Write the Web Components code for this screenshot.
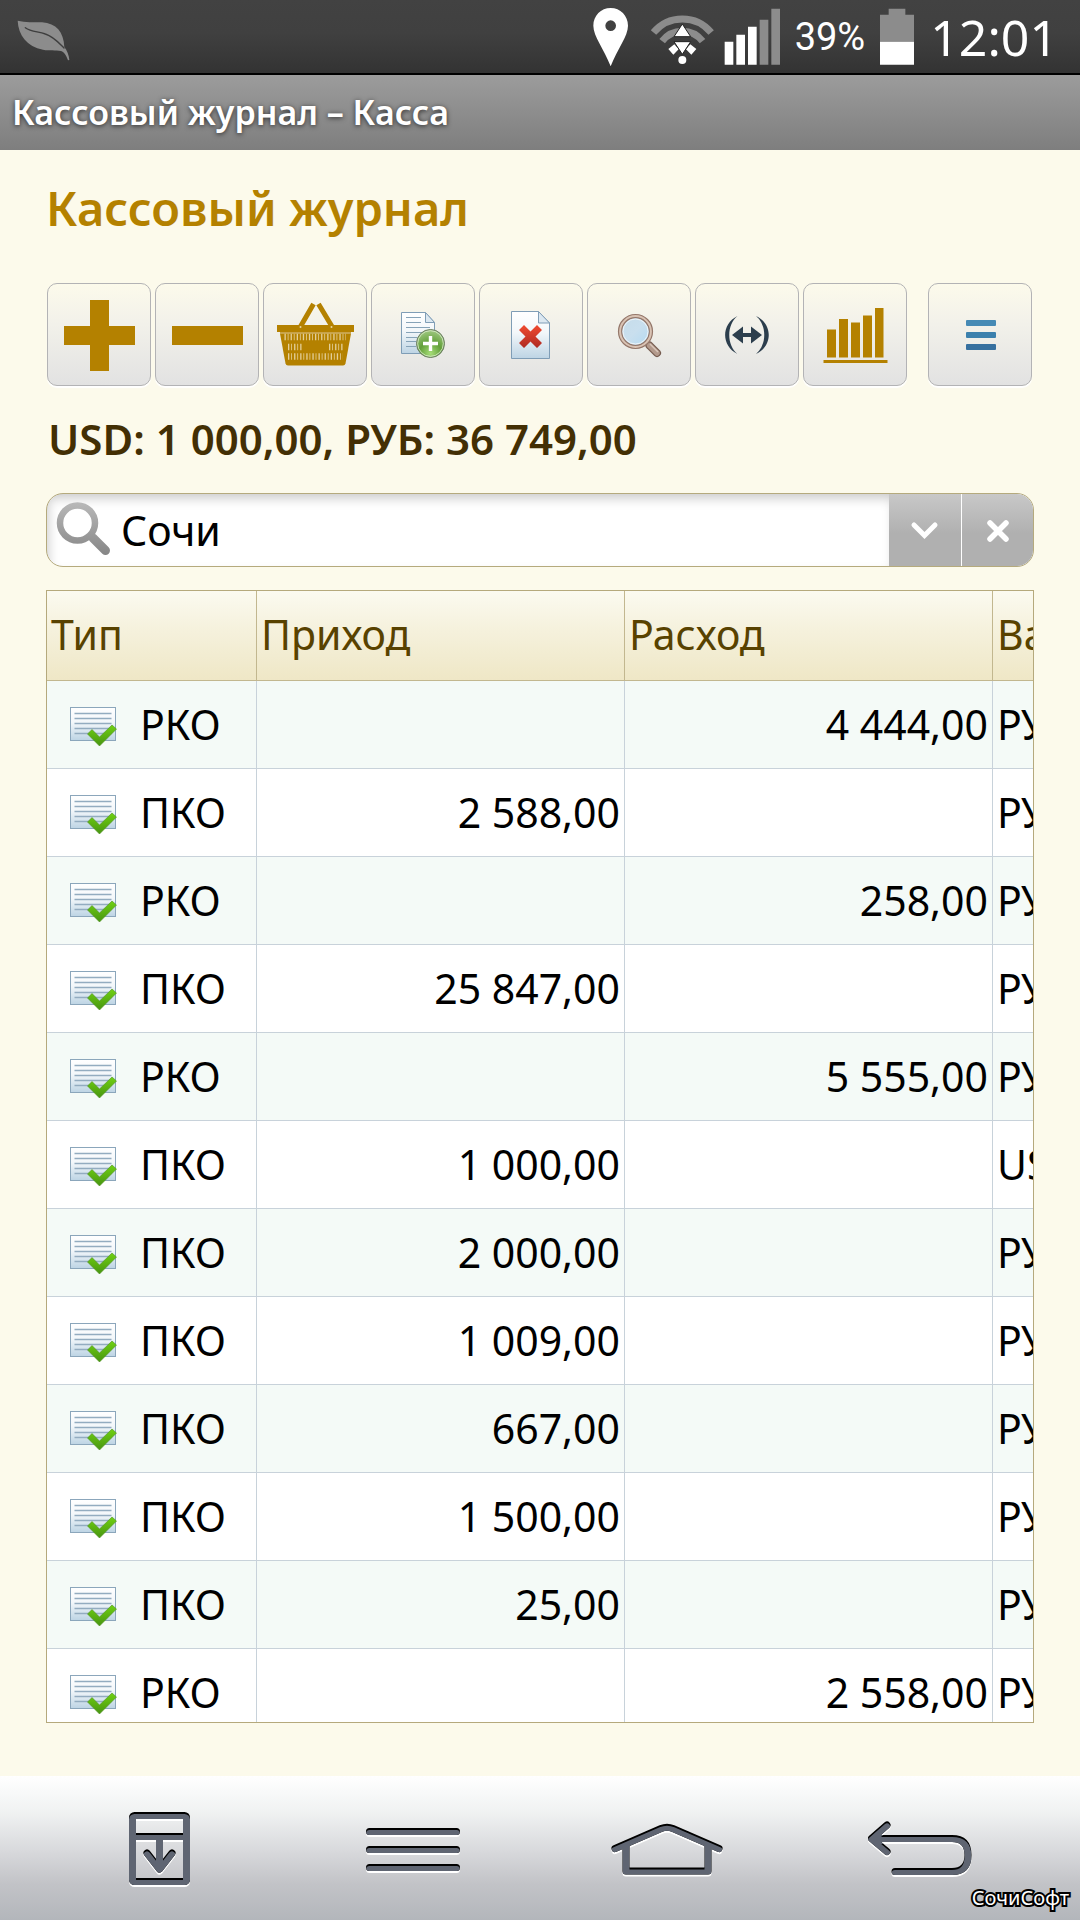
<!DOCTYPE html>
<html lang="ru">
<head>
<meta charset="utf-8">
<meta name="viewport" content="width=device-width, initial-scale=1">
<title>Кассовый журнал – Касса</title>
<style>
  html, body { margin: 0; height: 100%; }
  body { font-family: "Noto Sans", "Open Sans", sans-serif; }
</style>
</head>
<body>
<cash-app></cash-app>

<script>
const define = (name, html, setup) => {
  const template = document.createElement('template');
  template.innerHTML = html;
  customElements.define(name, class extends HTMLElement {
    constructor() {
      super();
      this.attachShadow({ mode: 'open' }).append(template.content.cloneNode(true));
    }
    connectedCallback() {
      if (setup && !this.ready) { this.ready = true; setup.call(this, this.shadowRoot); }
    }
  });
};

/* ---------- status bar ---------- */
define('status-bar', `
  <style>
    :host { display: flex; align-items: center; box-sizing: border-box; height: 75px; flex: none;
      padding: 0 22px 0 17px; color: #fff; border-bottom: 2px solid #000;
      background: linear-gradient(#424242 0%, #404040 45%, #333 100%); }
    svg { display: block; flex: none; }
    .space { flex: 1; }
    .signal { margin: 0 14px 0 9px; }
    .wifi { margin-left: 21px; }
    .battery { margin: 0 16px 0 15px; }
    .percent { font: 38px/60px Roboto, "Noto Sans", sans-serif; }
    .clock { font-size: 50px; line-height: 60px; }
  </style>
  <svg width="54" height="50" viewBox="50 38 162 150">
    <path fill="#8c8c8c" d="M52 64C75 70 100 68 125 69C168 72 190 98 192 143C200 153 206 168 207 182L203 183C199 170 192 158 182 155C165 152 150 155 128 151C80 141 54 108 52 64Z"/>
    <path fill="none" stroke="#3e3e3e" stroke-width="4" stroke-linecap="round" d="M75 85C92 98 112 96 135 104C160 112 174 129 191 146"/>
  </svg>
  <span class="space"></span>
  <svg width="37" height="60" viewBox="150 24 111 180">
    <path fill="#fff" fill-rule="evenodd" d="M206 27C235 27 258 50 258 80C258 112 226 150 206 202C186 150 154 112 154 80C154 50 177 27 206 27ZM206 64A16 16 0 1 0 206 96A16 16 0 1 0 206 64Z"/>
  </svg>
  <svg class="wifi" width="65" height="60" viewBox="320 22 195 180">
    <g fill="none" stroke="#8c8c8c" stroke-width="21">
      <path d="M330.500 98.500A112 112 0 0 1 503.500 98.500"/>
      <path d="M356.500 124.500A76 76 0 0 1 477.500 124.500"/>
    </g>
    <path fill="#fff" d="M375 148L393 134L406 149L390 165ZM459 148L441 134L428 149L444 165Z"/>
    <circle cx="417" cy="181" r="12" fill="#fff"/>
    <path fill="#fff" stroke="#222" stroke-width="3" d="M417 73L442 111H392ZM392 126H442L417 164Z"/>
  </svg>
  <svg class="signal" width="57" height="60" viewBox="535 22 171 180">
    <path fill="#fff" d="M537 126h26v69h-26zM572 105h26v90h-26zM607 81h26v114h-26z"/>
    <path fill="#8c8c8c" d="M642 60h26v135h-26zM677 27h26v168h-26z"/>
  </svg>
  <span class="percent">39%</span>
  <svg class="battery" width="34" height="60" viewBox="987 22 102 180">
    <path fill="#8c8c8c" d="M1013 27h50v18h26v81h-102v-81h26z"/>
    <path fill="#fff" d="M987 126h102v69h-102z"/>
  </svg>
  <span class="clock">12:01</span>
`);

/* ---------- window title ---------- */
define('title-bar', `
  <style>
    :host { display: flex; align-items: center; height: 73px; flex: none; padding: 0 12px 2px;
      background: linear-gradient(#9c9c9c, #7e7e7e); }
    span { color: #fff; font-size: 34px; line-height: 48px; font-weight: 600;
      text-shadow: 0 1px 5px rgba(0,0,0,.7); }
  </style>
  <span><slot></slot></span>
`);

/* ---------- toolbar button ---------- */
const sheet = (id) => `<linearGradient id="${id}" x2="0" y2="1"><stop offset="0" stop-color="#fff"/><stop offset=".45" stop-color="#f3f7fa"/><stop offset="1" stop-color="#bdd4e4"/></linearGradient>`;
const toolIcons = {
  plus: `<path fill="#b48100" d="M43 17h19v26h26v19h-26v26h-19v-26h-26v-19h26z"/>`,
  minus: `<path fill="#b48100" d="M17 43h71v19h-71z"/>`,
  basket: `
    <path fill="none" stroke="#b48100" stroke-width="5" d="M50.500 21L37.500 43.500M55.500 21L69 43.500"/>
    <path fill="#b48100" d="M14 42h77v7h-77z"/>
    <path fill="#c9a34a" d="M17 49h71v1.500h-71z"/>
    <path fill="#b48100" d="M17 50.500h71l-5.500 30q-.5 2-2.500 2h-55q-2 0-2.500-2z"/>
    <circle cx="37.500" cy="44" r="1" fill="#e6d3a0"/><circle cx="68.500" cy="44" r="1" fill="#e6d3a0"/>
    <path stroke="#e3cf9a" stroke-width="6.500" stroke-dasharray="1.300 1.900 .8 2.100" d="M21.500 54H83M25 64H39M66 64H80M25 73.500H80"/>`,
  add: `<defs>${sheet('s')}<radialGradient id="g" cx=".5" cy=".85" r=".8"><stop offset="0" stop-color="#a6dd78"/><stop offset=".5" stop-color="#63a03a"/><stop offset="1" stop-color="#9cc67e"/></radialGradient></defs>
    <path fill="url(#s)" stroke="#7f9db6" d="M30.500 29.500h24l9 10v31h-33z"/>
    <path fill="#dce8f1" stroke="#7f9db6" d="M54.500 29.500v10h9z"/>
    <path stroke="#86a3b8" stroke-width="1.200" d="M35 34.500H50M35 39.500H50M35 44.500H59M35 49.500H52M35 54.500H46M35 58.500H45M35 63.500H45"/>
    <circle cx="59.500" cy="60.500" r="14" fill="url(#g)" stroke="#6b7a64" stroke-width="1"/>
    <circle cx="59.500" cy="60.500" r="12.800" fill="none" stroke="#dcecd0" stroke-width="1" opacity=".8"/>
    <path stroke="#fff" stroke-width="3.400" d="M52 60.500h15M59.500 53v15"/>`,
  remove: `<defs>${sheet('s')}<linearGradient id="r" x2="0" y2="1"><stop offset="0" stop-color="#f04a30"/><stop offset="1" stop-color="#ae2a22"/></linearGradient></defs>
    <path fill="url(#s)" stroke="#7f9db6" d="M32.500 28.500h27l11 11.500v35.500h-38z"/>
    <path fill="#dce8f1" stroke="#7f9db6" d="M59.500 28.500v11.500h11z"/>
    <path fill="url(#r)" d="M45 42l6.500 6.500L58 42l5 5l-6.500 6.500L63 60l-5 5l-6.500-6.500L45 65l-5-5l6.500-6.500L40 47z"/>`,
  find: `<defs><linearGradient id="l" x2="1" y2="1"><stop offset="0" stop-color="#c6dcea"/><stop offset=".5" stop-color="#c9dfee"/><stop offset=".8" stop-color="#bcdcf0"/></linearGradient></defs>
    <path stroke="#765c50" stroke-width="8" stroke-linecap="round" d="M62.500 62.500L70 70"/>
    <path stroke="#b39a8c" stroke-width="5.500" stroke-linecap="round" d="M62.500 62.500L70 70"/>
    <path stroke="#d9c6ba" stroke-width="1.500" d="M63 61L71 69"/>
    <circle cx="48.500" cy="48.500" r="17" fill="#d9c3b4" stroke="#94776a" stroke-width="1.200"/>
    <circle cx="48.500" cy="48.500" r="13.800" fill="url(#l)" stroke="#94776a" stroke-width="1.200"/>
    <circle cx="48.500" cy="48.500" r="12.500" fill="none" stroke="#eef5f9"/>`,
  width: `<path fill="#2c3e4d" d="M42.500 33C26 41 26 63 42.500 71C31.500 62 31.500 42 42.500 33ZM61 33C78 41 78 63 61 71C72 62 72 42 61 33ZM37 52l11-8.500v6.500h8v-6.500l11 8.500l-11 8.500v-6.500h-8v6.500z"/>`,
  chart: `<path fill="#b48100" d="M24 46.500h9v28h-9zM36 36h9v38.500h-9zM48 39.500h9v35h-9zM60 32.500h9v42h-9zM72 25h8.500v49.500h-8.500zM20.500 77h64v3h-64z"/>`,
  menu: `<rect x="38" y="37" width="30" height="6" rx="1" fill="#468ab5"/><rect x="38" y="49" width="30" height="6" rx="1" fill="#3b80ad"/><rect x="38" y="61" width="30" height="6" rx="1" fill="#36709f"/>`
};
define('tool-button', `
  <style>
    :host { display: block; }
    button { display: block; box-sizing: border-box; width: 104px; height: 103px; padding: 0;
      border: 1px solid #b3b3b5; border-radius: 10px; box-shadow: 0 2px 1px #fff;
      background: linear-gradient(#fcfaeb, #f2f1ea 40%, #e2e2e2); cursor: pointer; }
    svg { display: block; margin: -1px; }
  </style>
  <button type="button"></button>
`, function (root) {
  const button = root.querySelector('button');
  button.setAttribute('aria-label', this.getAttribute('label'));
  button.innerHTML = `<svg width="104" height="103" viewBox="0 0 104 103">${toolIcons[this.getAttribute('icon')]}</svg>`;
});

define('tool-bar', `
  <style>
    :host { display: flex; gap: 4px; padding: 0 1px; }
    .end { margin-left: auto; padding-right: 1px; }
  </style>
  <slot></slot><div class="end"><slot name="end"></slot></div>
`);

/* ---------- search ---------- */
define('search-field', `
  <style>
    :host { display: block; }
    form { display: flex; box-sizing: border-box; height: 74px; margin: 0; overflow: hidden;
      border: 1px solid #b5aa7d; border-radius: 17px; background: #fff; }
    label { display: flex; flex: 1; min-width: 0; align-items: stretch;
      box-shadow: inset 3px 6px 12px -2px rgba(0,0,0,.22); }
    svg { display: block; flex: none; }
    input { flex: 1; min-width: 0; padding: 0 8px; border: 0; outline: 0; background: none;
      color: #000; font: inherit; font-size: 41px; }
    button { width: 72px; padding: 0; border: 0; cursor: pointer;
      background: linear-gradient(#c8c8c8, #b0b0b0 55%); }
    button + button { border-left: 1px solid #fff; }
  </style>
  <form>
    <label>
      <svg width="66" height="72" viewBox="0 0 66 72">
        <defs><linearGradient id="q" gradientUnits="userSpaceOnUse" x1="0" y1="8" x2="0" y2="62"><stop offset="0" stop-color="#b9b9b9"/><stop offset="1" stop-color="#858585"/></linearGradient></defs>
        <circle cx="30.500" cy="29" r="17.500" fill="#fff" stroke="url(#q)" stroke-width="6.500"/>
        <path stroke="url(#q)" stroke-width="9" stroke-linecap="round" d="M46 44L58.500 56.500"/>
      </svg>
      <input type="text" value="Сочи" aria-label="Поиск">
    </label>
    <button type="button" aria-label="Показать варианты"><svg width="71" height="72" viewBox="0 0 71 72"><path fill="none" stroke="#fff" stroke-width="5" stroke-linecap="round" d="M25 31l10.500 10.500L46 31"/></svg></button>
    <button type="button" aria-label="Очистить"><svg width="71" height="72" viewBox="0 0 71 72"><path stroke="#fff" stroke-width="5.500" stroke-linecap="round" d="M28 29l16 16M44 29l-16 16"/></svg></button>
  </form>
`);

/* ---------- journal table ---------- */
const records = [
  ['РКО', '', '4 444,00', 'РУБ'],
  ['ПКО', '2 588,00', '', 'РУБ'],
  ['РКО', '', '258,00', 'РУБ'],
  ['ПКО', '25 847,00', '', 'РУБ'],
  ['РКО', '', '5 555,00', 'РУБ'],
  ['ПКО', '1 000,00', '', 'USD'],
  ['ПКО', '2 000,00', '', 'РУБ'],
  ['ПКО', '1 009,00', '', 'РУБ'],
  ['ПКО', '667,00', '', 'РУБ'],
  ['ПКО', '1 500,00', '', 'РУБ'],
  ['ПКО', '25,00', '', 'РУБ'],
  ['РКО', '', '2 558,00', 'РУБ']
];

define('posted-icon', `
  <style>:host { display: block; flex: none; padding-top: 6px; } svg { display: block; }</style>
  <svg width="48" height="40" viewBox="0 0 48 40">
    <defs>${sheet('s')}<linearGradient id="v" x2="0" y2="1"><stop offset="0" stop-color="#70d112"/><stop offset="1" stop-color="#479411"/></linearGradient></defs>
    <rect x=".5" y=".5" width="45" height="33" fill="url(#s)" stroke="#8ba6bb"/>
    <path stroke="#93acc0" stroke-width="1.400" d="M4.500 6.500h37M4.500 11.500h37M4.500 16.500h37M4.500 21.500h37M4.500 26.500h37"/>
    <path fill="url(#v)" stroke="#4f9024" stroke-width=".6" d="M17.500 27L22 22.500L29.500 30L42 18L46.500 22L29.500 39z"/>
  </svg>
`);

define('journal-table', `
  <style>
    :host { display: block; box-sizing: border-box; min-height: 0; overflow: auto; scrollbar-width: none;
      border: 1px solid #b5a97c; background: #fff; }
    table { border-collapse: separate; border-spacing: 0; table-layout: fixed; width: 1156px; font-size: 41px; line-height: 56px; }
    th, td { box-sizing: border-box; padding: 0 4px 2px; border-right: 1px solid #c8d2da; border-bottom: 1px solid #c8d2da;
      white-space: nowrap; font-weight: 400; text-align: left; }
    th { height: 90px; padding-bottom: 4px; color: #584200; border-color: #c2b78f;
      background: linear-gradient(#fbfaf0, #f5f1dc 45%, #efe7c6); }
    td { height: 88px; color: #000; }
    td.sum { text-align: right; }
    tbody tr:nth-child(odd) { background: #f4faf7; }
    .type { display: flex; align-items: center; gap: 22px; padding-left: 19px; }
    .kind { width: 210px; } .amount { width: 368px; }
  </style>
  <table>
    <colgroup><col class="kind"><col class="amount"><col class="amount"><col></colgroup>
    <thead><tr><th>Тип</th><th>Приход</th><th>Расход</th><th>Валюта</th></tr></thead>
    <tbody></tbody>
  </table>
`, function (root) {
  root.querySelector('tbody').innerHTML = records.map(([type, income, expense, currency]) => `
    <tr><td><div class="type"><posted-icon></posted-icon><span>${type}</span></div></td>
    <td class="sum">${income}</td><td class="sum">${expense}</td><td>${currency}</td></tr>`).join('');
});

/* ---------- navigation ---------- */
const navIcons = {
  drop: `<g fill="none" stroke="#000" stroke-width="7"><rect x="9.500" y="4.500" width="54" height="66" rx="2"/><path d="M11 25.500h52"/><path d="M36.500 26v33"/><path stroke-linecap="round" stroke-linejoin="round" d="M24 42l12.500 16L49 42"/></g>`,
  menu: `<g stroke="#000" stroke-width="7" stroke-linecap="round"><path d="M5.500 20.500h87M5.500 38.500h87M5.500 56.500h87"/></g>`,
  home: `<g fill="none" stroke="#000" stroke-width="7"><path stroke-linecap="round" d="M5 37.500L51 17.500Q57 15 63 17.500L109 37.500"/><path stroke-linejoin="round" d="M16 35v25h82v-25"/></g>`,
  back: `<g fill="none" stroke="#000" stroke-width="7" stroke-linecap="round" stroke-linejoin="round"><path d="M8 27.500h77q16 0 16 16.500t-16 16.500h-57"/><path d="M20 14L4.500 27.500L20 40.500"/></g>`
};
define('nav-button', `
  <style>
    :host { display: flex; justify-content: center; flex: 1; }
    button { display: block; padding: 0; border: 0; background: none; cursor: pointer; }
    svg { display: block; }
  </style>
  <button type="button"></button>
`, function (root) {
  const button = root.querySelector('button');
  const width = this.getAttribute('width');
  button.setAttribute('aria-label', this.getAttribute('label'));
  button.innerHTML = `<svg width="${width}" height="78" viewBox="0 0 ${width} 78">
    <filter id="bevel" x="-10%" y="-10%" width="120%" height="125%" color-interpolation-filters="sRGB">
      <feOffset in="SourceAlpha" dy="2" result="low"/>
      <feFlood flood-color="#fff"/><feComposite in2="low" operator="in" result="white"/>
      <feFlood flood-color="#5f6572"/><feComposite in2="low" operator="in"/>
      <feComposite in2="SourceAlpha" operator="in" result="grey"/>
      <feMerge><feMergeNode in="white"/><feMergeNode in="SourceGraphic"/><feMergeNode in="grey"/></feMerge>
    </filter>
    <g filter="url(#bevel)">${navIcons[this.getAttribute('icon')]}</g></svg>`;
});

define('nav-bar', `
  <style>
    :host { display: flex; align-items: center; position: relative;
      box-sizing: border-box; height: 144px; flex: none; padding: 3px 32px 0;
      background: linear-gradient(#fff 0%, #f0f2f2 25%, #d8d9dc 52%, #c2c3c7 75%, #b3b6bb 100%); }
    .brand { position: absolute; right: 11px; bottom: 8px; color: #fff; font-size: 20px; line-height: 28px;
      -webkit-text-stroke: 4px #000; paint-order: stroke fill; }
  </style>
  <slot></slot>
  <span class="brand">СочиСофт</span>
`);

/* ---------- application ---------- */
define('cash-app', `
  <style>
    :host { display: flex; flex-direction: column; height: 100vh; overflow: hidden; background: #fcfaeb; }
    main { display: flex; flex-direction: column; flex: 1; min-height: 0; box-sizing: border-box; padding: 24px 46px 53px; }
    h1 { margin: 0; color: #b48100; font-size: 47px; line-height: 68px; font-weight: 600; }
    tool-bar { margin: 41px 0 25px; }
    .totals { margin: 0; padding-left: 2px; color: #432f04; font-size: 42px; line-height: 56px; font-weight: 600; }
    search-field { margin: 26px 0 23px; }
    journal-table { flex: 1; }
  </style>
  <status-bar></status-bar>
  <title-bar>Кассовый журнал – Касса</title-bar>
  <main>
    <h1>Кассовый журнал</h1>
    <tool-bar>
      <tool-button icon="plus" label="Приход"></tool-button>
      <tool-button icon="minus" label="Расход"></tool-button>
      <tool-button icon="basket" label="Корзина"></tool-button>
      <tool-button icon="add" label="Добавить"></tool-button>
      <tool-button icon="remove" label="Удалить"></tool-button>
      <tool-button icon="find" label="Найти"></tool-button>
      <tool-button icon="width" label="Интервал"></tool-button>
      <tool-button icon="chart" label="Отчёт"></tool-button>
      <tool-button slot="end" icon="menu" label="Меню"></tool-button>
    </tool-bar>
    <p class="totals">USD: 1 000,00, РУБ: 36 749,00</p>
    <search-field></search-field>
    <journal-table></journal-table>
  </main>
  <nav-bar>
    <nav-button icon="drop" width="73" label="Шторка"></nav-button>
    <nav-button icon="menu" width="98" label="Меню"></nav-button>
    <nav-button icon="home" width="114" label="Домой"></nav-button>
    <nav-button icon="back" width="108" label="Назад"></nav-button>
  </nav-bar>
`);
</script>
</body>
</html>
